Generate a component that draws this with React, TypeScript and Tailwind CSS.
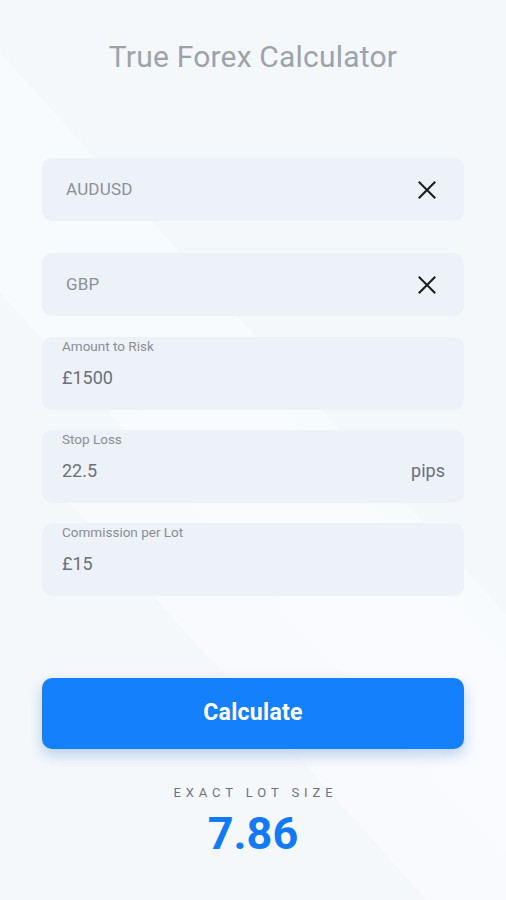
import React from "react";

function XIcon() {
  return (
    <svg width="20" height="20" viewBox="0 0 20 20" fill="none" stroke="#1a1a1a" strokeWidth="2" strokeLinecap="square">
      <path d="M2.5 2.5 L17.5 17.5 M17.5 2.5 L2.5 17.5" />
    </svg>
  );
}

function SelectField({ value }: { value: string }) {
  return (
    <div className="h-[63px] rounded-[10px] bg-[#edf2f8] flex items-center justify-between pl-[24px] pr-[27px]">
      <span className="text-[17px] text-[#8b9097] tracking-[0.2px]">{value}</span>
      <XIcon />
    </div>
  );
}

function InputField({ label, value, suffix }: { label: string; value: string; suffix?: string }) {
  return (
    <div className="h-[73px] rounded-[10px] bg-[#edf2f8] flex flex-col pl-[20px] pr-[19px] pt-[1px]">
      <span className="text-[13.5px] text-[#8a8e94] leading-[16px]">{label}</span>
      <div className="flex items-center justify-between mt-[14px]">
        <span className="text-[18px] text-[#6c7077] leading-[20px]">{value}</span>
        {suffix && <span className="text-[18px] text-[#6c7077] leading-[20px]">{suffix}</span>}
      </div>
    </div>
  );
}

export default function App() {
  return (
    <div
      className="relative w-[506px] h-[900px] overflow-hidden bg-[#f5f8fb]"
      style={{ fontFamily: "Roboto, 'Noto Sans', sans-serif" }}
    >
      {/* decorative diagonal background shapes */}
      <div className="absolute left-[170px] top-[-200px] w-[160px] h-[1300px] bg-[#fafcfe]/70 rotate-[-42deg]" />
      <div className="absolute left-[330px] top-[300px] w-[220px] h-[900px] bg-[#f9fbfd]/70 rotate-[-42deg]" />

      <div className="relative flex flex-col">
        <h1 className="text-center text-[30px] text-[#9ea3aa] font-normal mt-[39px] leading-[36px] tracking-[0.2px]">
          True Forex Calculator
        </h1>

        <div className="flex flex-col px-[42px] mt-[83px]">
          <SelectField value="AUDUSD" />
          <div className="h-[32px]" />
          <SelectField value="GBP" />
          <div className="h-[21px]" />
          <InputField label="Amount to Risk" value="£1500" />
          <div className="h-[20px]" />
          <InputField label="Stop Loss" value="22.5" suffix="pips" />
          <div className="h-[20px]" />
          <InputField label="Commission per Lot" value="£15" />

          <button className="mt-[82px] h-[71px] rounded-[10px] bg-[#1580fb] text-white text-[23px] font-bold tracking-[0.3px] shadow-[0_6px_14px_rgba(21,100,200,0.28)]">
            Calculate
          </button>
        </div>

        <div className="flex flex-col items-center mt-[36px]">
          <span className="text-[13px] text-[#6f7379] tracking-[4.9px] leading-[16px] pl-[5px]">EXACT LOT SIZE</span>
          <span className="text-[45px] font-bold text-[#1479f5] leading-[50px] mt-[8px]">7.86</span>
        </div>
      </div>
    </div>
  );
}
